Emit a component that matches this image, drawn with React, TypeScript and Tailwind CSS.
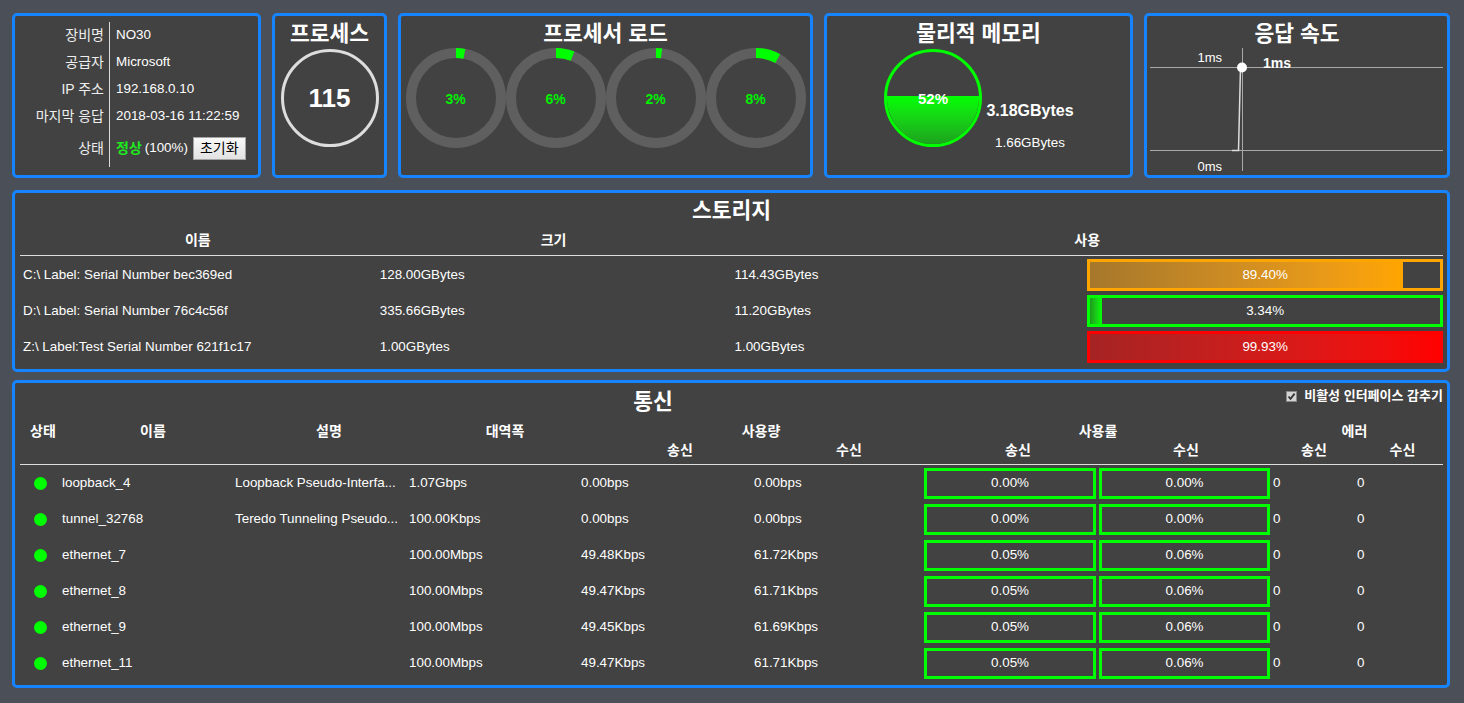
import React from 'react';

const panel = 'rounded-[5px] border-[3px] border-[#1784ff] bg-[#424242]';
const title = 'mt-[3px] h-[30px] text-center text-[21.5px] font-bold leading-[30px] text-white';

const info = [
  { label: '장비명', value: 'NO30' },
  { label: '공급자', value: 'Microsoft' },
  { label: 'IP 주소', value: '192.168.0.10' },
  { label: '마지막 응답', value: '2018-03-16 11:22:59' },
];

const cpus = [3, 6, 2, 8];

const storage = [
  {
    name: 'C:\\ Label: Serial Number bec369ed',
    size: '128.00GBytes',
    used: '114.43GBytes',
    pct: 89.4,
    label: '89.40%',
    border: 'border-[#ffa500]',
    fill: 'bg-linear-to-r from-[#a6782b] to-[#ffa500]',
  },
  {
    name: 'D:\\ Label: Serial Number 76c4c56f',
    size: '335.66GBytes',
    used: '11.20GBytes',
    pct: 3.34,
    label: '3.34%',
    border: 'border-[#00ff00]',
    fill: 'bg-linear-to-r from-[#1c9a1c] to-[#00ff00]',
  },
  {
    name: 'Z:\\ Label:Test Serial Number 621f1c17',
    size: '1.00GBytes',
    used: '1.00GBytes',
    pct: 99.93,
    label: '99.93%',
    border: 'border-[#ff0000]',
    fill: 'bg-linear-to-r from-[#a52323] to-[#ff0000]',
  },
];

const nets = [
  { name: 'loopback_4', desc: 'Loopback Pseudo-Interfa...', bw: '1.07Gbps', tx: '0.00bps', rx: '0.00bps', utx: '0.00%', urx: '0.00%' },
  { name: 'tunnel_32768', desc: 'Teredo Tunneling Pseudo...', bw: '100.00Kbps', tx: '0.00bps', rx: '0.00bps', utx: '0.00%', urx: '0.00%' },
  { name: 'ethernet_7', desc: '', bw: '100.00Mbps', tx: '49.48Kbps', rx: '61.72Kbps', utx: '0.05%', urx: '0.06%' },
  { name: 'ethernet_8', desc: '', bw: '100.00Mbps', tx: '49.47Kbps', rx: '61.71Kbps', utx: '0.05%', urx: '0.06%' },
  { name: 'ethernet_9', desc: '', bw: '100.00Mbps', tx: '49.45Kbps', rx: '61.69Kbps', utx: '0.05%', urx: '0.06%' },
  { name: 'ethernet_11', desc: '', bw: '100.00Mbps', tx: '49.47Kbps', rx: '61.71Kbps', utx: '0.05%', urx: '0.06%' },
];

function Donut({ value }: { value: number }) {
  const c = 2 * Math.PI * 45;
  return (
    <div className="relative h-[100px] w-[100px]">
      <svg width="100" height="100" viewBox="0 0 100 100" className="absolute inset-0">
        <circle cx="50" cy="50" r="45" fill="none" stroke="#5f5f5f" strokeWidth="10" />
        <circle
          cx="50"
          cy="50"
          r="45"
          fill="none"
          stroke="#00ff00"
          strokeWidth="10"
          strokeDasharray={`${(value / 100) * c} ${c}`}
          transform="rotate(-90 50 50)"
        />
      </svg>
      <div className="absolute inset-0 flex items-center justify-center pt-[2px] text-[14px] font-bold text-[#00f000]">
        {value}%
      </div>
    </div>
  );
}

function UtilBox({ text }: { text: string }) {
  return (
    <div className="mt-[3px] flex h-[31px] items-center justify-center border-[3px] border-[#00ff00] text-[13.4px] text-white">
      {text}
    </div>
  );
}

export default function App() {
  return (
    <div className="min-h-screen w-full bg-[#4b4f57] pl-[12px] pr-[14px] pt-[13px] pb-[15px] font-['Liberation_Sans','Noto_Sans_CJK_KR',sans-serif] text-white">
      {/* top row */}
      <div className="flex h-[165px] gap-[11px]">
        {/* device info */}
        <div className={`${panel} w-[249px]`}>
          <div className="mt-[6px] grid grid-cols-[95px_1fr] text-[13.4px]">
            {info.map((r) => (
              <React.Fragment key={r.label}>
                <div className="flex h-[27px] items-center justify-end border-r border-[#dcdcdc] pr-[5px] text-[14px] text-[#eeeeee]">
                  {r.label}
                </div>
                <div className="flex h-[27px] items-center pl-[6px] text-white">{r.value}</div>
              </React.Fragment>
            ))}
            <div className="flex h-[37px] items-center justify-end border-r border-[#dcdcdc] pr-[5px] text-[14px] text-[#eeeeee]">
              상태
            </div>
            <div className="flex h-[37px] items-center pl-[6px]">
              <span className="text-[14px] font-bold text-[#1ee81e]">정상</span>
              <span className="ml-[3px]">(100%)</span>
              <button className="ml-[5px] h-[23px] border border-[#a3a3a3] bg-linear-to-b from-[#f8f8f8] to-[#e2e2e2] px-[6px] text-[14px] leading-[21px] text-black">
                초기화
              </button>
            </div>
          </div>
        </div>

        {/* process */}
        <div className={`${panel} w-[115px]`}>
          <div className={title}>프로세스</div>
          <div className="mx-auto flex h-[98px] w-[98px] items-center justify-center rounded-full border-[3px] border-[#dddddd] text-[26px] font-bold">
            115
          </div>
        </div>

        {/* cpu */}
        <div className={`${panel} w-[415px]`}>
          <div className={title}>프로세서 로드</div>
          <div className="-mt-[1px] flex justify-center">
            {cpus.map((v, i) => (
              <Donut key={i} value={v} />
            ))}
          </div>
        </div>

        {/* memory */}
        <div className={`${panel} w-[309px]`}>
          <div className={title}>물리적 메모리</div>
          <div className="flex pl-[57px]">
            <div className="relative h-[98px] w-[98px] overflow-hidden rounded-full border-[3px] border-[#00ff00]">
              <div className="absolute inset-x-0 bottom-0 h-[52%] bg-linear-to-b from-[#00ff00] to-[#1ca31c]" />
              <div className="absolute inset-x-0 top-[38px] text-center text-[15px] font-bold leading-[18px] text-white">
                52%
              </div>
            </div>
            <div className="ml-[4px] flex w-[88px] flex-col items-center pt-[52px]">
              <div className="text-[16px] font-bold leading-[19px]">3.18GBytes</div>
              <div className="mt-[15px] text-[13.4px] leading-[16px]">1.66GBytes</div>
            </div>
          </div>
        </div>

        {/* response */}
        <div className={`${panel} w-[306px]`}>
          <div className={title}>응답 속도</div>
          <svg width="300" height="127" viewBox="0 0 300 127" className="-mt-[1px] block">
            <line x1="3" y1="19.5" x2="296" y2="19.5" stroke="#a8a8a8" strokeWidth="1" />
            <line x1="3" y1="102.5" x2="296" y2="102.5" stroke="#a8a8a8" strokeWidth="1" />
            <line x1="95.5" y1="0" x2="95.5" y2="123" stroke="#a8a8a8" strokeWidth="1" />
            <polyline points="85,102.5 91.5,102.5 93.5,20" fill="none" stroke="#dddddd" strokeWidth="1.5" />
            <circle cx="95" cy="19.5" r="5" fill="#ffffff" />
            <text x="75" y="14" textAnchor="end" fontSize="13" fill="#ffffff" fontFamily="Liberation Sans, sans-serif">
              1ms
            </text>
            <text x="75" y="123" textAnchor="end" fontSize="13" fill="#ffffff" fontFamily="Liberation Sans, sans-serif">
              0ms
            </text>
            <text x="116" y="20" fontSize="14" fontWeight="bold" fill="#ffffff" fontFamily="Liberation Sans, sans-serif">
              1ms
            </text>
          </svg>
        </div>
      </div>

      {/* storage */}
      <div className={`${panel} mt-[12px] h-[182px] pl-[5px] pr-[4px]`}>
        <div className="h-[33px] pt-[3px] text-center text-[21.5px] font-bold leading-[30px]">스토리지</div>
        <div className="grid h-[30px] grid-cols-4 items-center border-b border-[#dddddd] text-center text-[14px] font-bold">
          <div>이름</div>
          <div>크기</div>
          <div className="col-span-2">사용</div>
        </div>
        {storage.map((s) => (
          <div key={s.name} className="grid h-[36px] grid-cols-4 text-[13.4px]">
            <div className="flex items-center pl-[3px] pt-[3px]">{s.name}</div>
            <div className="flex items-center pl-[4px] pt-[3px]">{s.size}</div>
            <div className="flex items-center pl-[3px] pt-[3px]">{s.used}</div>
            <div className={`relative mt-[3px] h-[32px] border-[3px] ${s.border}`}>
              <div className={`absolute inset-y-0 left-0 ${s.fill}`} style={{ width: `${s.pct}%` }} />
              <div className="relative flex h-full items-center justify-center">{s.label}</div>
            </div>
          </div>
        ))}
      </div>

      {/* network */}
      <div className={`${panel} mt-[8px] h-[308px] pl-[5px] pr-[4px]`}>
        <div className="flex h-[37px] items-start">
          <div className="flex-1 pt-[3px] text-center text-[21.5px] font-bold leading-[32px]">통신</div>
          <div className="mt-[6px] flex items-center gap-[7px] text-[13px] font-bold leading-[14px]">
            <span className="flex h-[11px] w-[11px] items-center justify-center border border-[#8a8a8a] bg-[#d4d4d4]">
              <svg width="9" height="9" viewBox="0 0 9 9">
                <path d="M1.5 4.5 L3.5 6.8 L7.6 1.6" fill="none" stroke="#333333" strokeWidth="1.8" />
              </svg>
            </span>
            비활성 인터페이스 감추기
          </div>
        </div>
        <div className="grid h-[45px] grid-cols-[46px_174px_178px_174px_176px_162px_176px_160px_96px_81px] grid-rows-[22px_16px] border-b border-[#dddddd] text-center text-[14px] font-bold">
          <div className="leading-[22px]">상태</div>
          <div className="leading-[22px]">이름</div>
          <div className="leading-[22px]">설명</div>
          <div className="leading-[22px]">대역폭</div>
          <div className="col-span-2 leading-[22px]">사용량</div>
          <div className="col-span-2 leading-[22px]">사용률</div>
          <div className="col-span-2 leading-[22px]">에러</div>
          <div className="col-start-5 leading-[16px]">송신</div>
          <div className="leading-[16px]">수신</div>
          <div className="leading-[16px]">송신</div>
          <div className="leading-[16px]">수신</div>
          <div className="leading-[16px]">송신</div>
          <div className="leading-[16px]">수신</div>
        </div>
        {nets.map((n) => (
          <div
            key={n.name}
            className="grid h-[36px] grid-cols-[38px_173px_174px_172px_173px_172px_175px_174px_84px_88px] text-[13.4px]"
          >
            <div className="flex items-center justify-center pl-[2px]">
              <span className="h-[13px] w-[13px] rounded-full bg-[#00ff00]" />
            </div>
            <div className="flex items-center pl-[4px] pt-[1px]">{n.name}</div>
            <div className="flex items-center whitespace-nowrap pl-[4px] pt-[1px]">{n.desc}</div>
            <div className="flex items-center pl-[4px] pt-[1px]">{n.bw}</div>
            <div className="flex items-center pl-[4px] pt-[1px]">{n.tx}</div>
            <div className="flex items-center pl-[4px] pt-[1px]">{n.rx}</div>
            <div className="pl-[2px] pr-[1px]">
              <UtilBox text={n.utx} />
            </div>
            <div className="pl-[2px] pr-[1px]">
              <UtilBox text={n.urx} />
            </div>
            <div className="flex items-center pl-[2px] pt-[1px]">0</div>
            <div className="flex items-center pl-[2px] pt-[1px]">0</div>
          </div>
        ))}
      </div>
    </div>
  );
}
